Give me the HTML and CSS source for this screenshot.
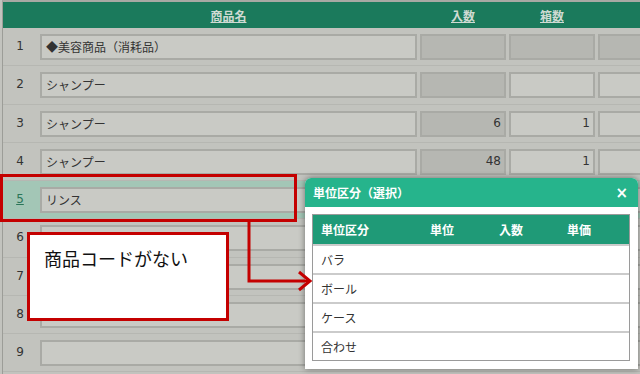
FILE: index.html
```html
<!DOCTYPE html>
<html lang="ja">

<head>
    <meta charset="UTF-8">
    <meta name="viewport" content="width=device-width, initial-scale=1.0">
    <title>商品登録</title>
    <link rel="stylesheet" href="styles.css">
</head>

<body>
    <div class="sheet">
        <div class="head">
            <span></span>
            <span class="head-cell">商品名</span>
            <span class="head-cell">入数</span>
            <span class="head-cell">箱数</span>
            <span class="head-cell"></span>
        </div>

        <div class="row">
            <span class="no">1</span>
            <span class="cell name">◆美容商品（消耗品）</span>
            <span class="cell dark"></span>
            <span class="cell dark"></span>
            <span class="cell dark"></span>
        </div>
        <div class="row">
            <span class="no">2</span>
            <span class="cell name">シャンプー</span>
            <span class="cell dark"></span>
            <span class="cell"></span>
            <span class="cell"></span>
        </div>
        <div class="row">
            <span class="no">3</span>
            <span class="cell name">シャンプー</span>
            <span class="cell dark num">6</span>
            <span class="cell num">1</span>
            <span class="cell"></span>
        </div>
        <div class="row">
            <span class="no">4</span>
            <span class="cell name">シャンプー</span>
            <span class="cell dark num">48</span>
            <span class="cell num">1</span>
            <span class="cell"></span>
        </div>
        <div class="row active">
            <span class="no">5</span>
            <span class="cell name">リンス</span>
            <span class="cell"></span>
            <span class="cell"></span>
            <span class="cell"></span>
        </div>
        <div class="row">
            <span class="no">6</span>
            <span class="cell name"></span>
            <span class="cell"></span>
            <span class="cell"></span>
            <span class="cell"></span>
        </div>
        <div class="row">
            <span class="no">7</span>
            <span class="cell name"></span>
            <span class="cell"></span>
            <span class="cell"></span>
            <span class="cell"></span>
        </div>
        <div class="row">
            <span class="no">8</span>
            <span class="cell name"></span>
            <span class="cell"></span>
            <span class="cell"></span>
            <span class="cell"></span>
        </div>
        <div class="row">
            <span class="no">9</span>
            <span class="cell name"></span>
            <span class="cell"></span>
            <span class="cell"></span>
            <span class="cell"></span>
        </div>
    </div>

    <!-- annotation: red frame, callout and arrow -->
    <div class="mark"></div>
    <div class="callout">商品コードがない</div>

    <div class="dialog">
        <div class="dialog-title">
            <span>単位区分（選択）</span>
            <span class="close">×</span>
        </div>
        <div class="dialog-body">
            <div class="unit-table">
                <div class="unit-row unit-head">
                    <span>単位区分</span>
                    <span>単位</span>
                    <span>入数</span>
                    <span>単価</span>
                </div>
                <div class="unit-row"><span>バラ</span><span></span><span></span><span></span></div>
                <div class="unit-row"><span>ボール</span><span></span><span></span><span></span></div>
                <div class="unit-row"><span>ケース</span><span></span><span></span><span></span></div>
                <div class="unit-row"><span>合わせ</span><span></span><span></span><span></span></div>
            </div>
        </div>
    </div>

    <svg class="arrow" width="640" height="374" viewBox="0 0 640 374">
        <polyline points="249,222 249,281 309,281" fill="none" stroke="#c40000" stroke-width="3" />
        <polyline points="299,272 310,281 299,290" fill="none" stroke="#c40000" stroke-width="3" />
    </svg>
</body>

</html>
```

FILE: styles.css
```css
body {
    margin: 0;
    background-color: #c2c3be;
    font-family: "DejaVu Sans", "Noto Sans CJK JP", sans-serif;
    font-size: 12px;
    color: #333;
    overflow: hidden;
    height: 374px;
    position: relative;
}

.sheet {
    margin-left: 2px;
    border-left: 1px solid #9c9d98;
    border-top: 2px solid #a8a9a4;
    height: 374px;
    box-sizing: border-box;
    overflow: hidden;
}

.head,
.row {
    display: grid;
    grid-template-columns: 34px 377px 86px 86px 60px;
    column-gap: 3px;
}

.head {
    height: 26px;
    background-color: #1b7a5c;
    align-items: center;
}

.head-cell {
    text-align: center;
    color: #cfdad3;
    font-weight: bold;
    text-decoration: underline;
    font-family: "Noto Sans CJK JP", sans-serif;
}

.row {
    height: 38.25px;
    box-sizing: border-box;
    padding-top: 6px;
    border-bottom: 1px solid #b6b7b2;
}

.row.active {
    background-color: #a3c6b6;
}

.no {
    text-align: center;
    line-height: 24px;
}

.row.active .no {
    color: #2a7558;
    text-decoration: underline;
}

.cell {
    height: 26px;
    box-sizing: border-box;
    border: 2px solid #a9aaa5;
    background-color: #c9cac5;
    padding: 0 4px;
    line-height: 21px;
    white-space: nowrap;
    overflow: hidden;
    font-family: "Noto Sans CJK JP", sans-serif;
}

.cell.dark {
    background-color: #b6b7b2;
}

.cell.num {
    text-align: right;
    padding-right: 3px;
    font-family: "DejaVu Sans", sans-serif;
}

.mark {
    position: absolute;
    left: 0;
    top: 174px;
    width: 297px;
    height: 48px;
    box-sizing: border-box;
    border: 3px solid #c40000;
}

.callout {
    position: absolute;
    left: 27px;
    top: 232px;
    width: 202px;
    height: 89px;
    box-sizing: border-box;
    border: 3px solid #c40000;
    background-color: #fff;
    padding: 11px 0 0 14px;
    font-family: "Noto Sans CJK JP", sans-serif;
    font-size: 18px;
    line-height: 24px;
    color: #111;
}

.dialog {
    position: absolute;
    left: 305px;
    top: 178px;
    width: 333px;
    background-color: #fff;
    border-radius: 6px 6px 0 0;
    box-shadow: 0 0 6px rgba(0, 0, 0, 0.45);
    font-family: "Noto Sans CJK JP", sans-serif;
}

.dialog-title {
    display: flex;
    justify-content: space-between;
    align-items: center;
    height: 29px;
    padding: 0 10px 0 8px;
    background-color: #26b48c;
    border-radius: 6px 6px 0 0;
    color: #fff;
    font-weight: bold;
}

.close {
    font-family: "DejaVu Sans", sans-serif;
    font-size: 15px;
}

.dialog-body {
    padding: 7px 8px 8px 7px;
}

.unit-table {
    border: 1px solid #9a9a9a;
}

.unit-row {
    display: grid;
    grid-template-columns: 109px 69px 68px 1fr;
    height: 29px;
    align-items: center;
    border-top: 2px solid #cbcbcb;
    box-sizing: border-box;
    color: #333;
}

.unit-row span {
    padding-left: 8px;
}

.unit-head {
    border-top: none;
    background-color: #1f9a77;
    color: #fff;
    font-weight: bold;
}

.arrow {
    position: absolute;
    left: 0;
    top: 0;
    pointer-events: none;
}
```
